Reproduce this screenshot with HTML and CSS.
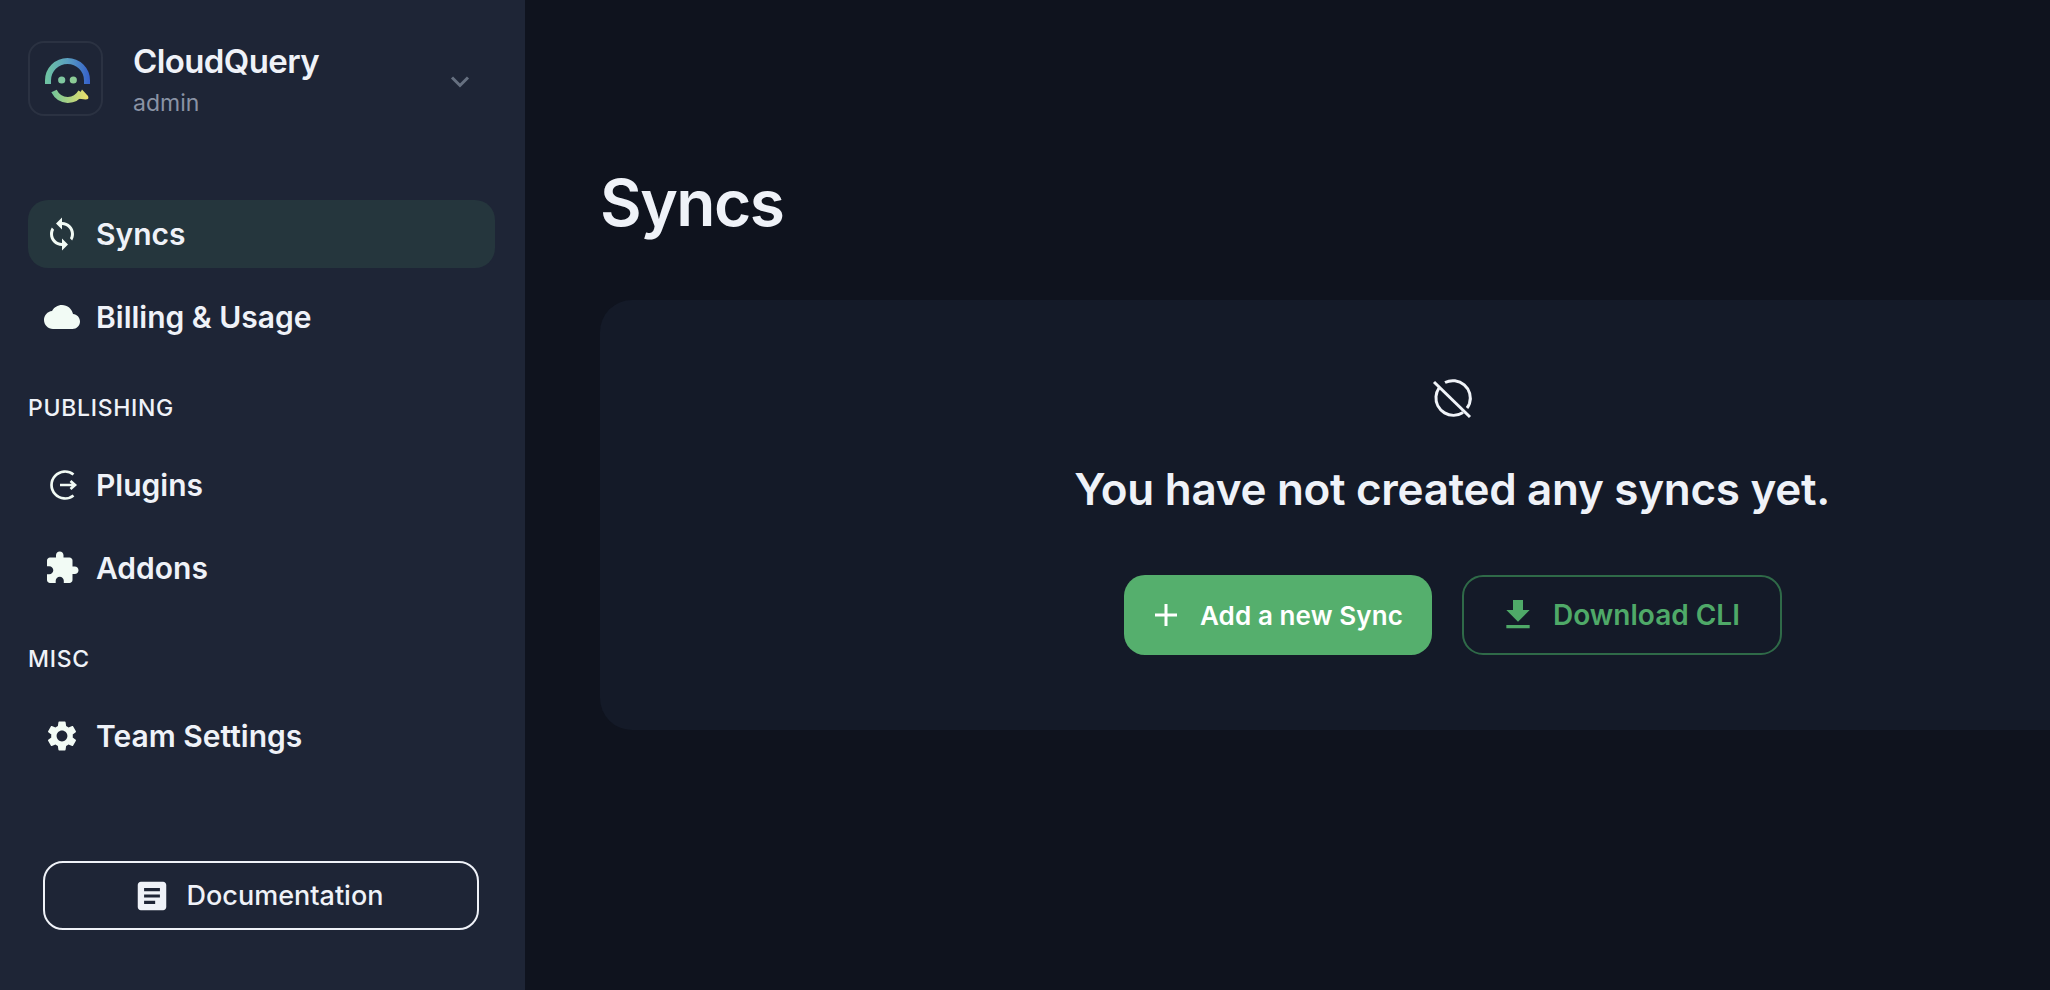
FILE: index.html
```html
<!DOCTYPE html>
<html lang="en">
<head>
  <meta charset="UTF-8">
  <title>Syncs - CloudQuery</title>
  <link rel="stylesheet" href="styles.css">
</head>
<body>
  <aside class="sidebar">
    <div class="team">
      <div class="team-logo">
        <svg width="71" height="71" viewBox="0 0 71 71" fill="none">
          <defs>
            <linearGradient id="arcTop" x1="15" y1="30" x2="60" y2="30" gradientUnits="userSpaceOnUse">
              <stop offset="0" stop-color="#6fc5a0"/>
              <stop offset="0.5" stop-color="#5a9fc0"/>
              <stop offset="1" stop-color="#3560cc"/>
            </linearGradient>
            <linearGradient id="arcBottom" x1="21" y1="50" x2="59" y2="50" gradientUnits="userSpaceOnUse">
              <stop offset="0" stop-color="#6fc59a"/>
              <stop offset="1" stop-color="#efe06a"/>
            </linearGradient>
          </defs>
          <path d="M18 41V37.500A19.500 19.500 0 0 1 57 37.500V41" stroke="url(#arcTop)" stroke-width="6"/>
          <circle cx="31.700" cy="37" r="3.600" fill="#80c7a0"/>
          <circle cx="43.300" cy="37" r="3.600" fill="#8ccb96"/>
          <path d="M24 48C30 59.700 45 59.700 51 49" stroke="url(#arcBottom)" stroke-width="6"/>
          <path d="M52 46.500L58 53Q59.500 56.500 55.500 56.500L47 55.500Z" fill="url(#arcBottom)"/>
        </svg>
      </div>
      <div class="team-text">
        <div class="team-name">CloudQuery</div>
        <div class="team-role">admin</div>
      </div>
      <svg class="team-chevron" width="24" height="24" viewBox="0 0 24 24" fill="none">
        <path d="M4 7.500L12 15.500L20 7.500" stroke="#667080" stroke-width="3"/>
      </svg>
    </div>

    <nav class="nav">
      <a class="nav-item active">
        <svg class="nav-icon" viewBox="0 0 24 24"><path d="M12 4V1L8 5l4 4V6c3.310 0 6 2.690 6 6 0 1.010-.25 1.970-.7 2.800l1.460 1.460C19.540 15.030 20 13.570 20 12c0-4.420-3.580-8-8-8zm0 14c-3.310 0-6-2.690-6-6 0-1.010.25-1.970.7-2.800L5.240 7.740C4.460 8.970 4 10.430 4 12c0 4.420 3.580 8 8 8v3l4-4-4-4v3z"/></svg>
        Syncs
      </a>
      <a class="nav-item">
        <svg class="nav-icon" viewBox="0 0 24 24"><path d="M19.350 10.040C18.670 6.590 15.640 4 12 4 9.110 4 6.600 5.640 5.350 8.040 2.340 8.360 0 10.910 0 14c0 3.310 2.690 6 6 6h13c2.760 0 5-2.240 5-5 0-2.640-2.050-4.780-4.650-4.960z"/></svg>
        Billing &amp; Usage
      </a>

      <div class="nav-label">PUBLISHING</div>
      <a class="nav-item">
        <svg class="nav-icon" viewBox="0 0 36 36"><path d="M29.500 7.500A13.500 13.500 0 1 0 29.500 28.500" class="line"/><path d="M16 18H31M26.500 14L31 18L26.500 22" class="line"/></svg>
        Plugins
      </a>
      <a class="nav-item">
        <svg class="nav-icon" viewBox="0 0 24 24"><path d="M20.500 11H19V7c0-1.100-.9-2-2-2h-4V3.500C13 2.120 11.880 1 10.500 1S8 2.120 8 3.500V5H4c-1.100 0-1.990.9-1.990 2v3.800H3.500c1.490 0 2.700 1.210 2.700 2.700s-1.210 2.700-2.700 2.700H2V20c0 1.100.9 2 2 2h3.800v-1.500c0-1.490 1.210-2.700 2.700-2.700 1.490 0 2.700 1.210 2.700 2.700V22H17c1.100 0 2-.9 2-2v-4h1.500c1.380 0 2.500-1.120 2.500-2.500S21.880 11 20.500 11z"/></svg>
        Addons
      </a>

      <div class="nav-label">MISC</div>
      <a class="nav-item">
        <svg class="nav-icon" viewBox="0 0 24 24"><path d="M19.140 12.940c.04-.3.06-.61.06-.94 0-.32-.02-.64-.07-.94l2.030-1.580c.18-.14.23-.41.12-.61l-1.920-3.320c-.12-.22-.37-.29-.59-.22l-2.390.96c-.5-.38-1.030-.7-1.620-.94l-.36-2.540c-.04-.24-.24-.41-.48-.41h-3.840c-.24 0-.43.17-.47.41l-.36 2.540c-.59.24-1.130.57-1.620.94l-2.390-.96c-.22-.08-.47 0-.59.22L2.740 8.870c-.12.21-.08.47.12.61l2.030 1.580c-.05.3-.09.63-.09.94s.02.64.07.94l-2.030 1.580c-.18.14-.23.41-.12.61l1.920 3.320c.12.22.37.29.59.22l2.390-.96c.5.38 1.030.7 1.620.94l.36 2.540c.05.24.24.41.48.41h3.840c.24 0 .44-.17.47-.41l.36-2.540c.59-.24 1.130-.56 1.620-.94l2.390.96c.22.08.47 0 .59-.22l1.920-3.320c.12-.22.07-.47-.12-.61l-2.010-1.580zM12 15.600c-1.980 0-3.600-1.620-3.600-3.600s1.620-3.600 3.600-3.600 3.600 1.620 3.600 3.600-1.620 3.600-3.600 3.600z"/></svg>
        Team Settings
      </a>
    </nav>

    <a class="docs-btn">
      <svg class="docs-icon" viewBox="0 0 24 24"><path d="M19 3H5c-1.100 0-2 .9-2 2v14c0 1.100.9 2 2 2h14c1.100 0 2-.9 2-2V5c0-1.100-.9-2-2-2zm-5 14H7v-2h7v2zm3-4H7v-2h10v2zm0-4H7V7h10v2z"/></svg>
      Documentation
    </a>
  </aside>

  <main class="main">
    <h1 class="page-title">Syncs</h1>
    <section class="empty-card">
      <svg class="empty-icon" width="42" height="42" viewBox="0 0 42 42" fill="none">
        <path d="M14 4.500A17.500 17.500 0 0 1 38.500 25.500A17 17 0 0 1 36 30M32 34.500A17.500 17.500 0 0 1 5 18.500A17 17 0 0 1 8 10" stroke="#f1f4f9" stroke-width="3"/>
        <path d="M3 4L39 39" stroke="#f1f4f9" stroke-width="3"/>
      </svg>
      <h2 class="empty-title">You have not created any syncs yet.</h2>
      <div class="empty-actions">
        <button class="btn btn-primary">
          <svg width="24" height="24" viewBox="0 0 24 24" fill="none"><path d="M12 1V23M1 12H23" stroke="#fff" stroke-width="3"/></svg>
          Add a new Sync
        </button>
        <button class="btn btn-outline">
          <svg width="40" height="40" viewBox="0 0 24 24" fill="#4fa968"><path d="M19 9h-4V3H9v6H5l7 7 7-7zM5 18v2h14v-2H5z"/></svg>
          Download CLI
        </button>
      </div>
    </section>
  </main>
</body>
</html>
```

FILE: styles.css
```css
* {
  box-sizing: border-box;
}
html, body {
  margin: 0;
  height: 990px;
  overflow: hidden;
}
body {
  display: flex;
  font-family: Inter, "Liberation Sans", sans-serif;
  background: #0f131e;
  color: #eff2f8;
}
.sidebar {
  width: 525px;
  height: 990px;
  flex-shrink: 0;
  display: flex;
  flex-direction: column;
  padding: 41px 30px 60px 28px;
  background: #1e2536;
}
.team {
  display: flex;
  align-items: flex-start;
}
.team-logo {
  width: 75px;
  height: 75px;
  border: 2px solid #2b3242;
  border-radius: 16px;
}
.team-text {
  margin-left: 30px;
  flex: 1;
}
.team-name {
  font-size: 33px;
  font-weight: 600;
  line-height: 40px;
  letter-spacing: -0.6px;
}
.team-role {
  margin-top: 6px;
  font-size: 23px;
  line-height: 32px;
  color: #8a93a5;
}
.team-chevron {
  align-self: center;
  margin-right: 23px;
  margin-top: 4px;
}
.nav {
  margin-top: 81px;
  display: flex;
  flex-direction: column;
  gap: 15px;
}
.nav-item {
  display: flex;
  align-items: center;
  gap: 16px;
  height: 68px;
  padding-left: 16px;
  border-radius: 20px;
  font-size: 30px;
  font-weight: 600;
}
.nav-item.active {
  background: #25363d;
}
.nav-icon {
  width: 36px;
  height: 36px;
  fill: #f2fbf5;
}
.nav-icon .line {
  fill: none;
  stroke: #f2fbf5;
  stroke-width: 2.700;
}
.nav-label {
  margin: 26px 0 12px;
  font-size: 23px;
  font-weight: 500;
  line-height: 32px;
  letter-spacing: 0.7px;
}
.docs-btn {
  margin: auto 16px 0 15px;
  height: 69px;
  display: flex;
  align-items: center;
  justify-content: center;
  gap: 16px;
  padding-right: 6px;
  border: 2px solid #eff2f8;
  border-radius: 20px;
  font-size: 27px;
  font-weight: 500;
}
.docs-icon {
  width: 38px;
  height: 38px;
  fill: #eff2f8;
}
.main {
  flex: 1;
  min-width: 0;
  overflow: hidden;
  padding: 162px 0 0 75px;
}
.page-title {
  margin: 0 0 56px;
  font-size: 64px;
  line-height: 82px;
  font-weight: 600;
  letter-spacing: -1.500px;
}
.empty-card {
  width: 1704px;
  height: 430px;
  display: flex;
  flex-direction: column;
  align-items: center;
  padding-top: 78px;
  background: #141a28;
  border-radius: 32px;
}
.empty-title {
  margin: 41px 0 0;
  font-size: 44px;
  line-height: 56px;
  font-weight: 600;
  letter-spacing: -0.3px;
}
.empty-actions {
  margin: 58px 0 0 2px;
  display: flex;
  gap: 30px;
}
.btn {
  height: 80px;
  display: flex;
  align-items: center;
  border-radius: 21px;
  font-family: inherit;
  font-weight: 600;
}
.btn-primary {
  width: 308px;
  gap: 22px;
  padding: 0 0 0 30px;
  border: none;
  background: #55af6d;
  color: #fff;
  font-size: 26px;
  letter-spacing: 0.1px;
}
.btn-outline {
  width: 320px;
  gap: 15px;
  padding: 0 0 0 34px;
  border: 2px solid #2f6a48;
  background: transparent;
  color: #4fa968;
  font-size: 28px;
}
```
